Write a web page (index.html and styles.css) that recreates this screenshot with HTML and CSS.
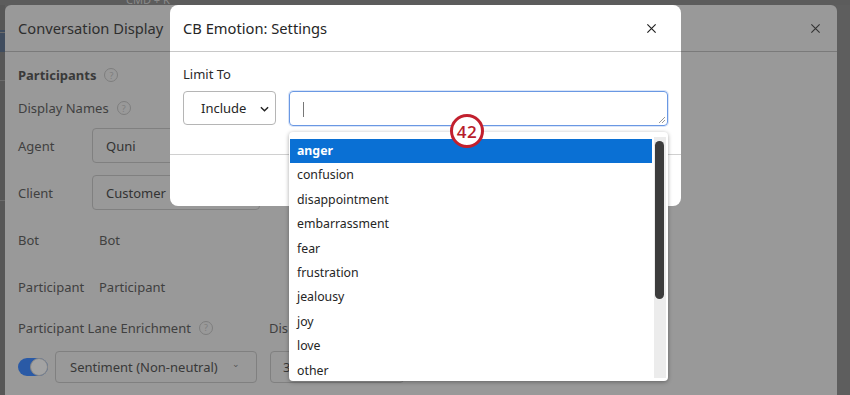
FILE: index.html
```html
<!DOCTYPE html>
<html>
<head>
<meta charset="utf-8">
<link rel="stylesheet" href="styles.css">
</head>
<body>
<div class="page">
  <div class="topbar"><span class="cmd">CMD + K</span></div>
  <div class="sidestrip">
    <div class="sline s1"></div><div class="sline s2"></div><div class="sline s3"></div>
  </div>

  <div class="back-modal">
    <div class="bm-head">
      <span class="bm-title">Conversation Display</span>
      <svg class="bm-close" width="11" height="11" viewBox="0 0 12 12"><path d="M1.5 1.5 L10.5 10.5 M10.5 1.5 L1.5 10.5" stroke="#333" stroke-width="1.2" fill="none"/></svg>
    </div>
    <div class="bm-body">
      <div class="bm-section"><b>Participants</b><span class="q">?</span></div>
      <div class="bm-sub">Display Names<span class="q">?</span></div>
      <div class="bm-rows">
        <div class="bm-row"><span class="lbl">Agent</span><div class="fake-input w-agent">Quni</div></div>
        <div class="bm-row"><span class="lbl">Client</span><div class="fake-input w-client">Customer</div></div>
        <div class="bm-row"><span class="lbl">Bot</span><span class="val">Bot</span></div>
        <div class="bm-row"><span class="lbl">Participant</span><span class="val">Participant</span></div>
      </div>
      <div class="bm-lane">
        <span class="lane-lbl">Participant Lane Enrichment<span class="q">?</span></span>
        <span class="dis">Dis</span>
      </div>
      <div class="bm-controls">
        <div class="toggle"><div class="knob"></div></div>
        <div class="fake-select">Sentiment (Non-neutral)<span class="caret">⌄</span></div>
        <div class="fake-num">3</div>
      </div>
    </div>
  </div>

  <div class="modal">
    <div class="m-head">
      <span class="m-title">CB Emotion: Settings</span>
      <svg class="m-close" width="11" height="11" viewBox="0 0 12 12"><path d="M1.5 1.5 L10.5 10.5 M10.5 1.5 L1.5 10.5" stroke="#222" stroke-width="1.3" fill="none"/></svg>
    </div>
    <div class="m-body">
      <div class="m-label">Limit To</div>
      <div class="m-row">
        <div class="m-select">Include
          <svg class="chev" width="9" height="6" viewBox="0 0 10 6"><path d="M1 1 L5 5 L9 1" stroke="#222" stroke-width="1.6" fill="none"/></svg>
        </div>
        <div class="m-text"><span class="caretline"></span>
          <svg class="grip" width="8" height="8" viewBox="0 0 8 8"><path d="M7 1 L1 7 M7 4 L4 7" stroke="#999" stroke-width="1" fill="none"/></svg>
        </div>
      </div>
    </div>
    <div class="m-foot"></div>
  </div>

  <div class="dropdown">
    <ul class="opts">
      <li class="sel">anger</li>
      <li>confusion</li>
      <li>disappointment</li>
      <li>embarrassment</li>
      <li>fear</li>
      <li>frustration</li>
      <li>jealousy</li>
      <li>joy</li>
      <li>love</li>
      <li>other</li>
    </ul>
    <div class="track"><div class="thumb"></div></div>
  </div>

  <div class="badge">42</div>
</div>
</body>
</html>
```

FILE: styles.css
```css
* { box-sizing: border-box; }
html, body { margin: 0; padding: 0; }
body {
  width: 850px; height: 395px; overflow: hidden;
  font-family: "Noto Sans", "Open Sans", sans-serif;
  background: #5e5e5e;
}
.page { position: relative; width: 850px; height: 395px; overflow: hidden; }

.topbar { height: 5px; background: #5c5c5c; position: relative; }
.cmd { position: absolute; left: 126px; top: -8px; font-size: 11px; color: #8a8a8a; }
.sidestrip { position: absolute; left: 0; top: 5px; width: 5px; height: 390px; background: #575757; }
.sline { position: absolute; left: 0; width: 5px; height: 1px; background: #6a6a6a; }
.s1 { top: 27px; } .s2 { top: 75px; } .s3 { top: 195px; }
.sidestrip::before { content: ""; position: absolute; left: 0; top: 25px; width: 5px; height: 22px; background: #3f4c5e; }

/* back modal */
.back-modal {
  position: absolute; left: 5px; top: 5px; width: 832px; height: 400px;
  background: #999999; border-radius: 6px 6px 0 0;
  color: #333333;
}
.bm-head {
  height: 47px; border-bottom: 1px solid #7a7a7a;
  display: flex; align-items: center; justify-content: space-between;
  padding: 0 16px 0 13px;
}
.bm-title { font-size: 14.7px; color: #2e2e2e; }
.bm-body { padding: 12px 13px; font-size: 13px; }
.bm-section { height: 22px; display: flex; align-items: center; }
.bm-section b { font-weight: 700; color: #3a3a3a; }
.bm-sub { height: 22px; margin-top: 11px; display: flex; align-items: center; color: #404040; }
.q {
  display: inline-flex; width: 14px; height: 14px; border: 1px solid #7e7e7e; border-radius: 50%;
  font-size: 9px; color: #7e7e7e; align-items: center; justify-content: center; margin-left: 8px;
}
.bm-rows { margin-top: 3px; }
.bm-row { height: 47px; display: flex; align-items: center; }
.lbl { width: 74px; color: #404040; }
.val { margin-left: 7px; color: #404040; }
.fake-input {
  height: 35px; border: 1px solid #808080; border-radius: 4px;
  display: flex; align-items: center; padding-left: 13px; color: #333;
}
.w-agent { width: 200px; }
.w-client { width: 168px; }
.bm-lane { height: 22px; margin-top: 6.5px; display: flex; align-items: center; color: #404040; }
.lane-lbl { width: 251px; display: flex; align-items: center; }
.dis { white-space: nowrap; color: #404040; }
.bm-controls { margin-top: 12px; height: 32px; display: flex; align-items: center; }
.toggle {
  width: 30px; height: 18px; border-radius: 9px; background: #2a5aa6; position: relative; margin-right: 7px;
}
.knob {
  position: absolute; right: 0; top: 0; width: 18px; height: 18px; border-radius: 50%;
  background: #a3a3a3; border: 1px solid #858585;
}
.fake-select {
  width: 202px; height: 32px; border: 1px solid #808080; border-radius: 4px;
  display: flex; align-items: center; padding-left: 14px; color: #383838; position: relative;
}
.caret { position: absolute; right: 16px; top: 5px; font-size: 9px; color: #555; }
.fake-num {
  margin-left: 13px; width: 134px; height: 32px; border: 1px solid #808080; border-radius: 4px;
  display: flex; align-items: center; padding-left: 12px; color: #383838;
}

/* front modal */
.modal {
  position: absolute; left: 170px; top: 5px; width: 511px; height: 201px;
  background: #ffffff; border-radius: 8px; color: #262626;
}
.m-head {
  height: 47px; border-bottom: 1px solid #c8c8c8;
  display: flex; align-items: center; justify-content: space-between;
  padding: 0 24px 0 13px;
}
.m-title { font-size: 14.7px; color: #262626; }
.m-body { padding: 12px 13px 0; height: 103px; border-bottom: 1px solid #d0d0d0; }
.m-label { font-size: 13px; height: 20px; line-height: 20px; color: #2a2a2a; }
.m-row { display: flex; margin-top: 7px; gap: 13px; }
.m-select {
  width: 93px; height: 34px; border: 1px solid #b5b5b5; border-radius: 4px;
  display: flex; align-items: center; padding-left: 17px; font-size: 13px; color: #262626; position: relative;
}
.chev { position: absolute; right: 6px; top: 14px; }
.m-text {
  width: 379px; height: 35px; border: 1px solid #6a98e3; border-radius: 4px; position: relative;
  box-shadow: 0 0 0 1px rgba(106,152,227,0.25);
}
.caretline { position: absolute; left: 13px; top: 10px; width: 1px; height: 15px; background: #777; }
.grip { position: absolute; right: 1px; bottom: 1px; }

/* dropdown */
.dropdown {
  position: absolute; left: 289px; top: 132px; width: 379px; height: 249px;
  background: #ffffff; border-radius: 4px; overflow: hidden;
  box-shadow: 0 1px 4px rgba(0,0,0,0.35);
  display: flex; align-items: flex-start;
}
.opts {
  list-style: none; margin: 0; padding: 7px 0 0 1px; flex: 1; font-size: 12.3px; color: #252525;
  font-family: "Noto Sans", sans-serif; height: 244px; overflow: hidden;
}
.opts li { height: 24.4px; line-height: 23px; padding-left: 7px; }
.opts li.sel { background: #0a70d4; color: #ffffff; font-weight: 700; }
.track { width: 12px; height: 241px; margin: 5px 2px 3px 2px; background: #ececec; position: relative; }
.thumb { position: absolute; left: 1px; top: 4px; width: 9px; height: 158px; background: #3c3c3c; border-radius: 5px; }

/* badge */
.badge {
  position: absolute; left: 450px; top: 114px; width: 34px; height: 34px; border-radius: 50%;
  border: 3px solid #c2202e; background: #ffffff; color: #b81c2b;
  font-family: "Open Sans", sans-serif; font-size: 17px; font-weight: 600;
  display: flex; align-items: center; justify-content: center; letter-spacing: 0.5px;
}
```
